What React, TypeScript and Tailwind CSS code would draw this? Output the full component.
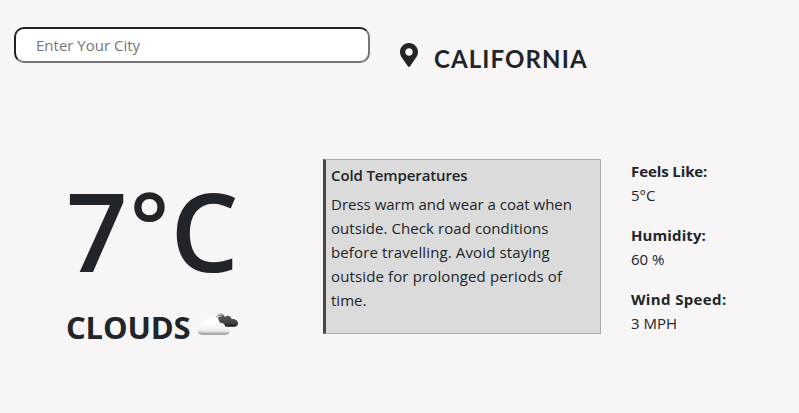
import React from "react";

const adviceLines = [
  { text: "Dress warm and wear a coat when", spacing: "tracking-[0px]" },
  { text: "outside. Check road conditions", spacing: "tracking-[0.07px]" },
  { text: "before travelling. Avoid staying", spacing: "tracking-[0.13px]" },
  { text: "outside for prolonged periods of", spacing: "tracking-[0.13px]" },
  { text: "time.", spacing: "tracking-[0px]" },
];

const stats = [
  { label: "Feels Like:", value: "5°C", labelSpacing: "tracking-[-0.1px]" },
  { label: "Humidity:", value: "60 %", labelSpacing: "tracking-[0.1px]" },
  { label: "Wind Speed:", value: "3 MPH", labelSpacing: "tracking-[0.36px]" },
];

function PinIcon() {
  return (
    <svg className="mt-4 h-6 w-[18px]" viewBox="0 0 384 512" fill="#212529">
      <path d="M172.268 501.67C26.97 291.031 0 269.413 0 192 0 85.961 85.961 0 192 0s192 85.961 192 192c0 77.413-26.97 99.031-172.268 309.67-9.535 13.774-29.93 13.773-39.464 0zM192 272c44.183 0 80-35.817 80-80s-35.817-80-80-80-80 35.817-80 80 35.817 80 80 80z" />
    </svg>
  );
}

function CloudsIcon() {
  return (
    <svg className="h-6 w-[42px]" viewBox="0 0 42 24">
      <defs>
        <linearGradient id="front" x1="0" y1="0" x2="0" y2="1">
          <stop offset="0.4" stopColor="#ffffff" />
          <stop offset="0.78" stopColor="#eeeeee" />
          <stop offset="0.9" stopColor="#bcbcbc" />
          <stop offset="1" stopColor="#8c8c8c" />
        </linearGradient>
        <linearGradient id="back" x1="0" y1="0" x2="0" y2="1">
          <stop offset="0" stopColor="#5c5c5c" />
          <stop offset="0.7" stopColor="#424242" />
          <stop offset="1" stopColor="#171717" />
        </linearGradient>
      </defs>
      <path d="M21 4.5C22 2.4 24.4 1.8 26.2 3C27.2 3.6 27.6 4.2 28 4.9C30.4 2.8 33.8 3.8 34.6 7C38 6.6 41 8.3 41 11.2C41 14 38.6 14.8 36 14.8H30C28 14.8 26.8 13.6 26.4 12C23 11.5 20.8 8.4 21 4.5Z" fill="url(#back)" />
      <path d="M18.6 7C19.4 3 22.8 .6 26.4 2.6" fill="none" stroke="#8f8f8f" strokeWidth="1" />
      <path d="M19.9 8C20.4 5 22.4 3.6 24.8 4" fill="none" stroke="#e4e4e4" strokeWidth="1" />
      <path d="M5 22.7C1.8 22.7 .5 20.8 .5 18.5C.5 16 2.4 14.3 5 14.2C3.6 10.5 6.5 8 9.5 9C10.6 6.3 13 4.8 15.7 4.8C19.6 4.8 22.4 7.6 22.5 11.2C26 10 28.5 12.6 28 15.5C31 15.2 32.8 16.9 32.8 19C32.8 21.3 31.2 22.7 28.5 22.7Z" fill="url(#front)" />
    </svg>
  );
}

export default function App() {
  return (
    <main className="h-[413px] w-full overflow-hidden bg-[#f7f5f6] font-['Open_Sans','Noto_Sans',sans-serif] text-[#212529]">
      <header className="flex h-[159px] items-start pt-[27px] pl-[14px]">
        <input
          className="h-9 w-[356px] rounded-[10px] border-2 border-t-[#212225] border-r-[#767676] border-b-[#767676] border-l-[#212225] bg-white pl-5 text-[15px] outline-none placeholder:text-[#757575]"
          placeholder="Enter Your City"
        />
        <div className="flex items-start pl-[30px]">
          <PinIcon />
          <h2 className="mt-[18px] ml-4 text-[24px] leading-7 font-bold tracking-[1.1px] whitespace-nowrap font-['Lato',sans-serif]">
            CALIFORNIA
          </h2>
        </div>
      </header>
      <section className="flex items-start">
        <div className="w-[323px] pl-[66px]">
          <h1 className="mt-[6px] flex h-[132px] text-[108px] leading-[132px] font-semibold whitespace-nowrap">
            <span>7</span>
            <span className="mt-[-7px] ml-[2px] text-[92px]">°</span>
            <span className="ml-[1px]">C</span>
          </h1>
          <div className="mt-[10px] flex h-10 items-center gap-[6px]">
            <span className="text-[31px] leading-10 font-bold tracking-[-0.15px] whitespace-nowrap">CLOUDS</span>
            <div className="mb-[7px]"><CloudsIcon /></div>
          </div>
        </div>
        <article className="h-[175px] w-[278px] border border-l-[3px] border-[#a9a9a9] border-l-[#484848] bg-[#dbdbdb] pt-[3px] pl-[5px] text-[15px]">
          <h3 className="leading-6 font-semibold tracking-[-0.12px] whitespace-nowrap">Cold Temperatures</h3>
          <div className="mt-[5px] leading-6">
            {adviceLines.map((line) => (
              <p key={line.text} className={`whitespace-nowrap ${line.spacing}`}>{line.text}</p>
            ))}
          </div>
        </article>
        <dl className="flex flex-col gap-4 pl-[30px] text-[15px] leading-6">
          {stats.map((s) => (
            <div key={s.label}>
              <dt className={`font-bold whitespace-nowrap ${s.labelSpacing}`}>{s.label}</dt>
              <dd>{s.value}</dd>
            </div>
          ))}
        </dl>
      </section>
    </main>
  );
}
